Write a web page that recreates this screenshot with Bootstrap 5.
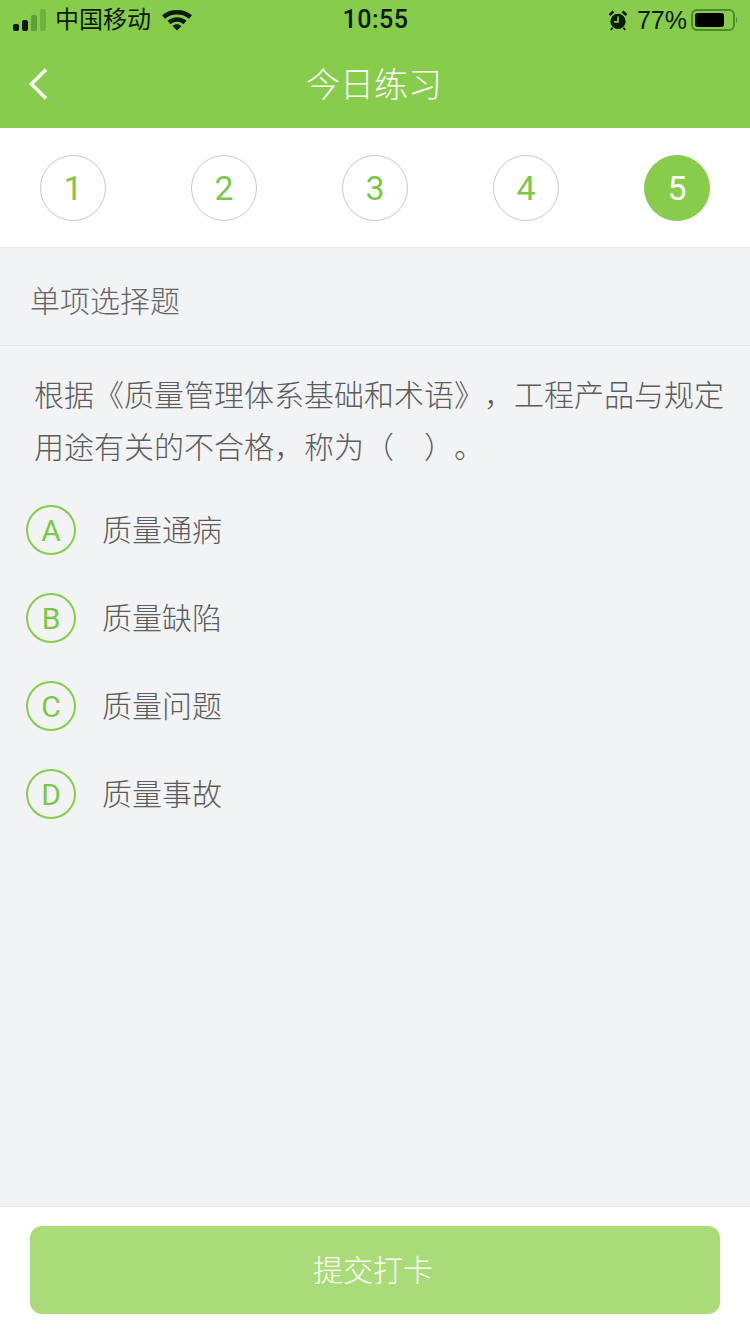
<!DOCTYPE html>
<html lang="zh"><head><meta charset="utf-8"><title>今日练习</title>
<link href="https://cdn.jsdelivr.net/npm/bootstrap@5.3.0/dist/css/bootstrap.min.css" rel="stylesheet">
<style>
html,body{height:100%}
body{font-family:"Liberation Sans","Noto Sans CJK SC",sans-serif;background:#f2f3f5;color:#666}
.app{height:1334px;width:750px;overflow:hidden}
.head-top{background:#87cc4a}
.stat{height:40px;padding:0 12px 0 13px;color:#0a1a05;font-size:24px}
.stat-l,.stat-r{flex:1 1 0;min-width:0}
.time{font-size:25px;font-weight:500;font-family:Roboto,sans-serif;letter-spacing:.5px;line-height:42px}
.carrier{margin-left:8px;font-size:24px;line-height:42px}
.wifi{margin-left:11px}
.pct{font-size:25px;font-family:"Liberation Sans",sans-serif;line-height:42px;margin:0 4px 0 10px}
.bar-nav{height:88px;position:relative}
.nav-ttl{font-size:34px;color:#fff;font-weight:300;line-height:90px;margin-right:2px}
.back{position:absolute;left:28px;top:27px}
.steps{height:120px;background:#fff;border-bottom:1px solid #e6e7e9;padding:0 40px}
.stp{width:66px;height:66px;border:1px solid #c9c9c9;border-radius:50%;color:#7cc74a;font-size:34px;line-height:1;font-family:Roboto,sans-serif;font-weight:400}
.stp.on{background:#87cc4a;border-color:#87cc4a;color:#fff}
.sect{height:98px;padding:9px 0 0 30px;border-bottom:1px solid #e6e7e9;font-size:30px;color:#666;font-weight:300}
.ques{padding:24px 20px 0 34px;font-size:30px;line-height:52px;color:#5c5c5c;font-weight:300;font-kerning:none;text-spacing-trim:space-all;font-feature-settings:"chws" 0,"palt" 0,"kern" 0}
.opts{padding:12px 0 0 26px}
.opt{height:88px;font-size:30px;color:#5c5c5c;font-weight:300}
.opt-c{width:50px;height:50px;border:2px solid #87cc4a;border-radius:50%;color:#7cc74a;font-size:30px;margin-right:26px;line-height:1;font-family:Roboto,sans-serif;font-weight:400;padding-top:2px}
.grow-sp{flex:1 1 auto}
.foot{height:128px;background:#fff;border-top:1px solid #e6e7e9;padding:19px 30px 0}
.sub{height:88px;width:100%;background:#a9dc79;border:0;border-radius:12px;color:#fff;font-size:30px;font-weight:300;padding:0 16px 0 12px}
</style></head>
<body>
<div class="app d-flex flex-column">
 <div class="head-top">
  <div class="stat d-flex align-items-center">
   <div class="stat-l d-flex align-items-center">
    <svg width="34" height="24" viewBox="0 0 34 24"><g fill="#0a1a05"><rect x="0" y="16" width="6" height="7" rx="2"/><rect x="9" y="12" width="6" height="11" rx="2"/></g><g fill="#5f9e38"><rect x="18" y="7" width="6" height="16" rx="2"/><rect x="27" y="1" width="6" height="22" rx="2" opacity=".6"/></g></svg>
    <span class="carrier">中国移动</span>
    <svg class="wifi" width="30" height="22" viewBox="0 0 30 22"><path d="M1.500 8C9 1.500 21 1.500 28.500 8" fill="none" stroke="#0a1a05" stroke-width="4.500"/><path d="M7 13.500c4.500-4 11.500-4 16 0" fill="none" stroke="#0a1a05" stroke-width="4.500"/><path d="M10.500 17c2.800-2.200 6.200-2.200 9 0l-4.500 4.500z" fill="#0a1a05"/></svg>
   </div>
   <div class="time">10:55</div>
   <div class="stat-r d-flex align-items-center justify-content-end">
    <svg width="18" height="21" viewBox="0 0 20 22"><circle cx="10" cy="12" r="8.500" fill="#0a1a05"/><path d="M10 6.500v6h-4.500" fill="none" stroke="#87cc4a" stroke-width="1.800"/><path d="M0.500 5L5 1M19.500 5L15 1" stroke="#0a1a05" stroke-width="3"/><path d="M4 19l-2 2.500M16 19l2 2.500" stroke="#0a1a05" stroke-width="2"/></svg>
    <span class="pct">77%</span>
    <svg width="47" height="24" viewBox="0 0 47 24"><rect x="1" y="2" width="42" height="20" rx="5" fill="none" stroke="#4f8a2e" stroke-width="2"/><rect x="4" y="5" width="29" height="14" rx="3" fill="#000"/><path d="M45 9c1.500.5 1.500 5.500 0 6z" fill="#4f8a2e"/></svg>
   </div>
  </div>
  <div class="bar-nav text-center">
   <svg class="back" width="22" height="34" viewBox="0 0 22 34"><path d="M18 2.500L3.500 17 18 31.500" fill="none" stroke="#fff" stroke-width="3.500"/></svg>
   <div class="nav-ttl">今日练习</div>
  </div>
 </div>
 <div class="steps d-flex justify-content-between align-items-center">
  <div class="stp d-flex align-items-center justify-content-center">1</div>
  <div class="stp d-flex align-items-center justify-content-center">2</div>
  <div class="stp d-flex align-items-center justify-content-center">3</div>
  <div class="stp d-flex align-items-center justify-content-center">4</div>
  <div class="stp on d-flex align-items-center justify-content-center">5</div>
 </div>
 <div class="sect d-flex align-items-center">单项选择题</div>
 <div class="ques">根据《质量管理体系基础和术语》，工程产品与规定用途有关的不合格，称为（　）。</div>
 <div class="opts">
  <div class="opt d-flex align-items-center"><span class="opt-c d-flex align-items-center justify-content-center">A</span><span>质量通病</span></div>
  <div class="opt d-flex align-items-center"><span class="opt-c d-flex align-items-center justify-content-center">B</span><span>质量缺陷</span></div>
  <div class="opt d-flex align-items-center"><span class="opt-c d-flex align-items-center justify-content-center">C</span><span>质量问题</span></div>
  <div class="opt d-flex align-items-center"><span class="opt-c d-flex align-items-center justify-content-center">D</span><span>质量事故</span></div>
 </div>
 <div class="grow-sp"></div>
 <div class="foot"><button class="btn sub d-flex align-items-center justify-content-center" type="button">提交打卡</button></div>
</div>
<script src="https://cdn.jsdelivr.net/npm/bootstrap@5.3.0/dist/js/bootstrap.bundle.min.js"></script>
</body></html>
